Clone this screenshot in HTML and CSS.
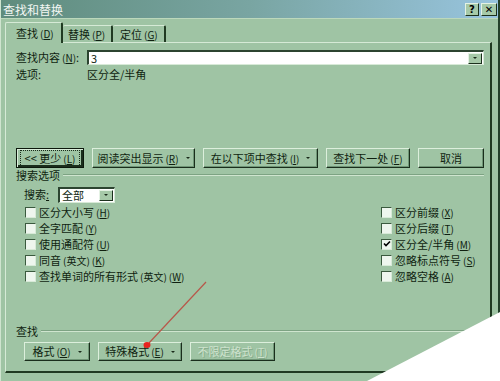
FILE: index.html
```html
<!DOCTYPE html>
<html lang="zh-CN">
<head>
    <meta charset="UTF-8">
    <title>查找和替换</title>
    <link rel="stylesheet" href="styles.css">
</head>
<body>

<div class="window">
    <div class="titlebar">
        <span class="title">查找和替换</span>
        <div class="title-buttons">
            <span class="tbtn help">?</span>
            <span class="tbtn close">✕</span>
        </div>
    </div>

    <div class="tabs">
        <div class="tab tab-find active"><span>查找<span class="key">(<u>D</u>)</span></span></div>
        <div class="tab tab-replace"><span>替换<span class="key">(<u>P</u>)</span></span></div>
        <div class="tab tab-goto"><span>定位<span class="key">(<u>G</u>)</span></span></div>
    </div>

    <div class="panel">
        <div class="find-row">
            <span class="find-label">查找内容<span class="key">(<u>N</u>)</span>:</span>
            <div class="combo">
                <span class="combo-text">3</span>
                <span class="drop"><span class="caret"></span></span>
            </div>
        </div>
        <div class="options-row">
            <span class="opt-label">选项:</span>
            <span>区分全/半角</span>
        </div>

        <div class="btn-row main-buttons">
            <div class="btn focus w-less"><span class="focus-rect">&lt;&lt; 更少<span class="key">(<u>L</u>)</span></span></div>
            <div class="btn w-read"><span>阅读突出显示<span class="key">(<u>R</u>)</span></span><span class="caret"></span></div>
            <div class="btn w-in"><span>在以下项中查找<span class="key">(<u>I</u>)</span></span><span class="caret"></span></div>
            <div class="btn w-next"><span>查找下一处<span class="key">(<u>F</u>)</span></span></div>
            <div class="btn w-cancel"><span>取消</span></div>
        </div>

        <div class="group-title"><span>搜索选项</span><span class="rule"></span></div>

        <div class="search-row">
            <span class="search-label">搜索<u>:</u></span>
            <div class="select">
                <span class="combo-text">全部</span>
                <span class="drop"><span class="caret"></span></span>
            </div>
        </div>

        <div class="checks">
            <div class="check"><span class="cb"></span><span>区分大小写<span class="key">(<u>H</u>)</span></span></div>
            <div class="check"><span class="cb"></span><span>区分前缀<span class="key">(<u>X</u>)</span></span></div>
            <div class="check"><span class="cb"></span><span>全字匹配<span class="key">(<u>Y</u>)</span></span></div>
            <div class="check"><span class="cb"></span><span>区分后缀<span class="key">(<u>T</u>)</span></span></div>
            <div class="check"><span class="cb"></span><span>使用通配符<span class="key">(<u>U</u>)</span></span></div>
            <div class="check"><span class="cb checked"><svg width="8" height="8" viewBox="0 0 8 8"><path d="M1 3.5 L3 5.5 L7 1.5" fill="none" stroke="#000" stroke-width="1.6"/></svg></span><span>区分全/半角<span class="key">(<u>M</u>)</span></span></div>
            <div class="check"><span class="cb"></span><span>同音<span class="key">(英文)</span><span class="key">(<u>K</u>)</span></span></div>
            <div class="check"><span class="cb"></span><span>忽略标点符号<span class="key">(<u>S</u>)</span></span></div>
            <div class="check"><span class="cb"></span><span>查找单词的所有形式<span class="key">(英文)</span><span class="key">(<u>W</u>)</span></span></div>
            <div class="check"><span class="cb"></span><span>忽略空格<span class="key">(<u>A</u>)</span></span></div>
        </div>

        <div class="group-title find-group"><span>查找</span><span class="rule"></span></div>

        <div class="btn-row bottom-buttons">
            <div class="btn w-format"><span>格式<span class="key">(<u>O</u>)</span></span><span class="caret"></span></div>
            <div class="btn w-special"><span>特殊格式<span class="key">(<u>E</u>)</span></span><span class="caret"></span></div>
            <div class="btn disabled w-noformat"><span>不限定格式<span class="key">(<u>T</u>)</span></span></div>
        </div>
    </div>
</div>

<!-- 标注箭头和右下角的翻页 -->
<svg class="overlay" width="500" height="381" viewBox="0 0 500 381">
    <line x1="206" y1="282" x2="149" y2="343" stroke="#b8574a" stroke-width="1.2"/>
    <ellipse cx="147" cy="345" rx="3.5" ry="3" fill="#e8231e"/>
    <polygon points="500,312 367,381 500,381" fill="#ffffff"/>
</svg>

</body>
</html>
```

FILE: styles.css
```css
body {
    margin: 0;
    width: 500px;
    height: 381px;
    overflow: hidden;
    position: relative;
    background-color: #9fc4a4;
    font-family: "Noto Sans CJK SC", sans-serif;
    font-size: 11px;
    line-height: 13px;
    color: #0f1f10;
}

u {
    text-decoration: underline;
    text-underline-offset: 1px;
}

.key {
    margin-left: 2px;
    font-size: 10px;
}

.window {
    height: 381px;
    box-sizing: border-box;
    border-left: 1px solid #cfe4cf;
    border-right: 2px solid #23402a;
}

.titlebar {
    height: 18px;
    display: flex;
    align-items: center;
    justify-content: space-between;
    padding: 0 1px 0 2px;
    background: linear-gradient(to right, #5f8c7d, #79a5a2 50%, #98c4de);
    border-bottom: 1px solid #bcd8bc;
    color: #f2f6f2;
}

.title {
    font-size: 12px;
}

.title-buttons {
    display: flex;
    gap: 2px;
}

.tbtn {
    height: 11px;
    display: flex;
    align-items: center;
    justify-content: center;
    background-color: #a6c9a8;
    border: 1px solid;
    border-color: #e4f2e4 #1c301c #1c301c #e4f2e4;
    color: #000;
    font: bold 10px "DejaVu Sans", sans-serif;
}

.help {
    width: 12px;
}

.close {
    width: 14px;
}

/* 标签页 */
.tabs {
    display: flex;
    align-items: flex-end;
    height: 20px;
    margin-top: 3px;
    padding-left: 4px;
}

.tab {
    box-sizing: border-box;
    height: 17px;
    display: flex;
    align-items: center;
    border-top: 1px solid #d6ead6;
    border-left: 1px solid #d6ead6;
    border-right: 2px solid #203a22;
    border-radius: 2px 2px 0 0;
}

.tab.active {
    height: 21px;
    margin-bottom: -1px;
    background-color: #9fc4a4;
    position: relative;
    z-index: 1;
}

.tab-find {
    width: 58px;
    padding-left: 10px;
}

.tab-replace {
    width: 50px;
    padding-left: 5px;
    border-left: none;
}

.tab-goto {
    width: 53px;
    padding-left: 7px;
    border-left: none;
}

.panel {
    box-sizing: border-box;
    width: 487px;
    margin-left: 4px;
    padding: 0 6px 10px 10px;
    border-top: 1px solid #d6ead6;
    border-left: 1px solid #d6ead6;
    border-right: 2px solid #203a22;
    border-bottom: 2px solid #203a22;
}

.find-row {
    display: flex;
    align-items: center;
    margin-top: 7px;
    height: 15px;
}

.find-label {
    width: 71px;
}

.combo,
.select {
    box-sizing: border-box;
    display: flex;
    align-items: center;
    justify-content: space-between;
    background-color: #ffffff;
    border-top: 2px solid #2c4430;
    border-left: 2px solid #2c4430;
    border-right: 1px solid #d8ead8;
    border-bottom: 1px solid #d8ead8;
}

.combo {
    width: 397px;
    height: 15px;
}

.combo-text {
    padding-left: 2px;
}

.drop {
    box-sizing: border-box;
    width: 14px;
    height: 11px;
    margin-right: 1px;
    display: flex;
    align-items: center;
    justify-content: center;
    background-color: #a6c9a8;
    border: 1px solid;
    border-color: #e4f2e4 #1c301c #1c301c #e4f2e4;
}

.caret {
    width: 0;
    height: 0;
    border-left: 2px solid transparent;
    border-right: 2px solid transparent;
    border-top: 2px solid #1a2a1a;
}

.options-row {
    display: flex;
    margin-top: 3px;
    height: 13px;
}

.opt-label {
    width: 71px;
}

/* 按钮 */
.btn-row {
    display: flex;
    gap: 8px;
}

.main-buttons {
    margin-top: 67px;
}

.btn {
    box-sizing: border-box;
    height: 20px;
    display: flex;
    align-items: center;
    justify-content: center;
    gap: 7px;
    white-space: nowrap;
    background-color: #9fc4a4;
    border: 1px solid;
    border-color: #dcefdc #1a2e1c #1a2e1c #dcefdc;
    box-shadow: inset -1px -1px #6f9676;
}

.btn.focus {
    border: 1px solid #0c180c;
    box-shadow: inset 1px 1px #dcefdc, inset -2px -2px #1a2e1c;
}

.focus-rect {
    padding: 0 3px;
    outline: 1px dotted #1a2a1a;
    outline-offset: 1px;
}

.btn.disabled {
    color: #cde2cd;
    text-shadow: 1px 1px #86ab8b;
}

.w-less { width: 68px; }
.w-read { width: 103px; }
.w-in { width: 115px; }
.w-next { width: 84px; }
.w-cancel { width: 66px; }

.group-title {
    display: flex;
    align-items: center;
    height: 14px;
}

.rule {
    flex: 1;
    margin-left: 3px;
    border-top: 1px solid #7da383;
    border-bottom: 1px solid #cfe5cf;
}

.search-row {
    display: flex;
    align-items: center;
    margin-top: 5px;
    height: 15px;
    padding-left: 8px;
}

.search-label {
    width: 34px;
}

.select {
    width: 57px;
    height: 16px;
}

/* 复选框 */
.checks {
    display: grid;
    grid-template-columns: 356px auto;
    grid-auto-rows: 16px;
    margin-top: 2px;
    padding-left: 9px;
}

.check {
    display: flex;
    align-items: center;
    white-space: nowrap;
}

.cb {
    box-sizing: border-box;
    width: 11px;
    height: 11px;
    margin-right: 3px;
    display: flex;
    align-items: center;
    justify-content: center;
    background-color: #eef6ee;
    border-top: 1px solid #3a5a3e;
    border-left: 1px solid #3a5a3e;
    border-right: 1px solid #d8ead8;
    border-bottom: 1px solid #d8ead8;
}

.find-group {
    margin-top: 40px;
}

.bottom-buttons {
    margin-top: 4px;
    padding-left: 8px;
}

.bottom-buttons .btn {
    height: 19px;
}

.w-format { width: 66px; }
.w-special { width: 84px; }
.w-noformat { width: 85px; }

.overlay {
    position: absolute;
    left: 0;
    top: 0;
    pointer-events: none;
}
```
